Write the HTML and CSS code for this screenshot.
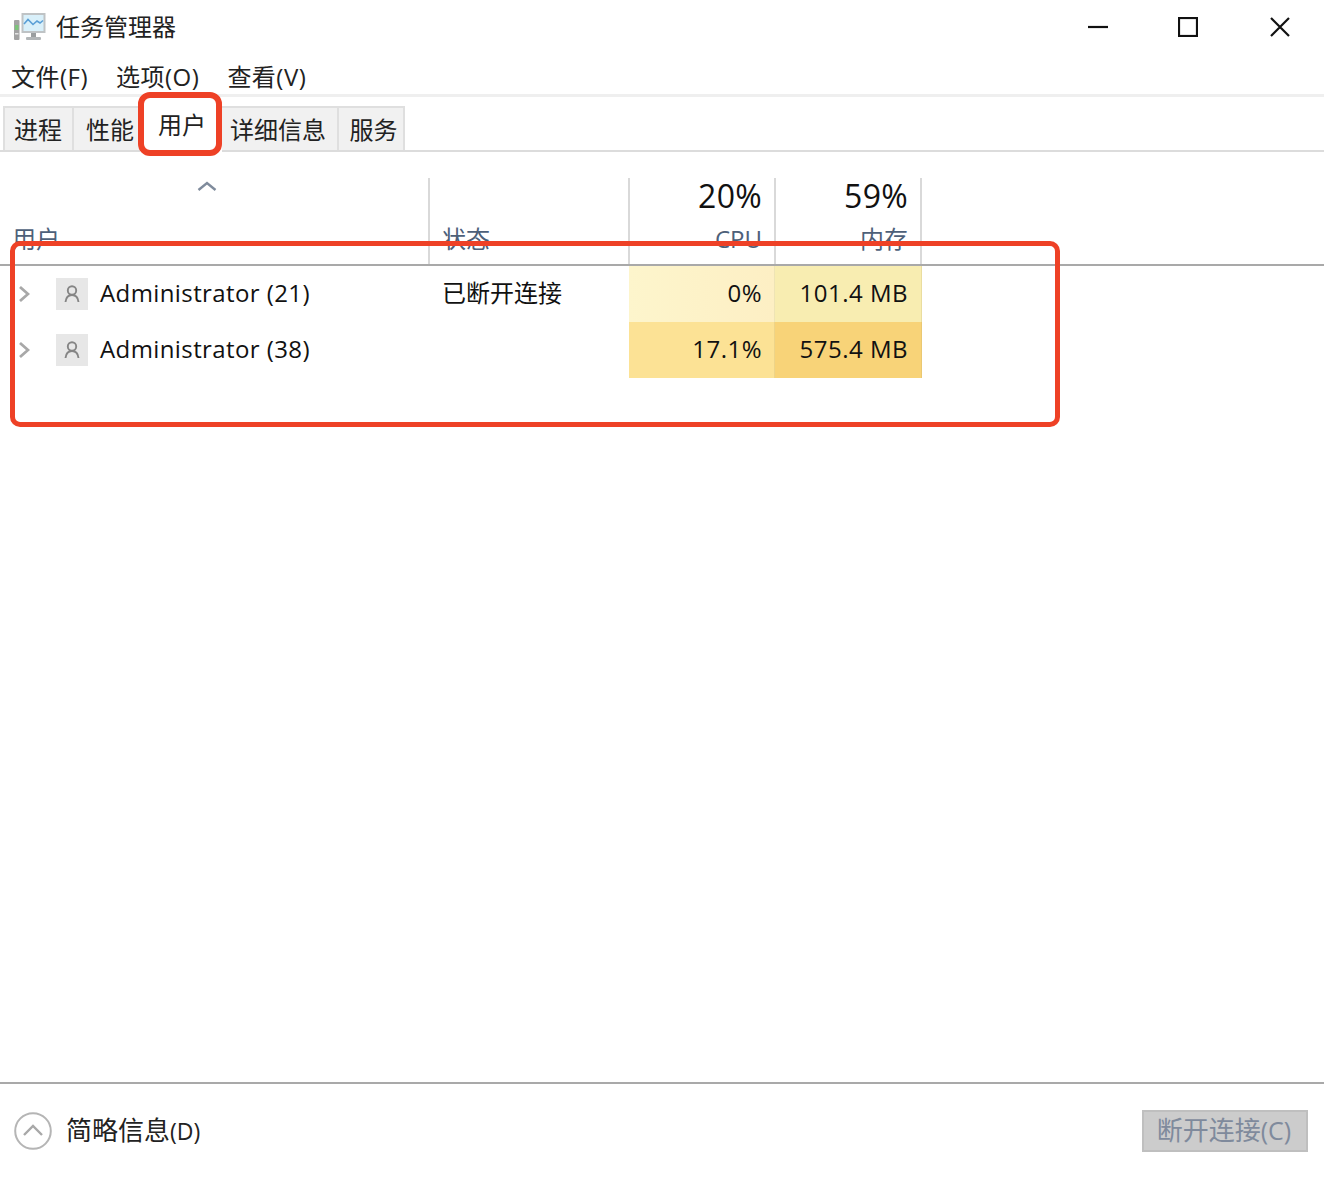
FILE: index.html
```html
<!DOCTYPE html>
<html lang="zh-CN">
<head>
<meta charset="utf-8">
<title>任务管理器</title>
<link rel="stylesheet" href="styles.css">
</head>
<body>
<div class="window">
  <header class="titlebar">
    <svg class="app-icon" width="34" height="30" viewBox="0 0 34 30">
      <rect x="1" y="8" width="5.5" height="20" rx="1" fill="#a3a3a3"/>
      <rect x="2" y="13" width="3.5" height="5" fill="#7cc47a"/>
      <rect x="2" y="21" width="3.5" height="1.5" fill="#e4e4e4"/>
      <rect x="8.5" y="1" width="24" height="20" fill="#bfc3c5"/>
      <rect x="10.5" y="3" width="20" height="16" fill="#d9f0fa"/>
      <path d="M11 12 L15 7.5 L20 12.5 L24 9 L27 11 L30 8.5" fill="none" stroke="#5a9fd6" stroke-width="1.6"/>
      <rect x="18" y="21" width="5" height="4" fill="#9a9ea0"/>
      <rect x="13" y="25" width="15" height="3" rx="1" fill="#b2b6b8"/>
    </svg>
    <span class="app-title">任务管理器</span>
    <div class="win-controls">
      <svg width="20" height="20" viewBox="0 0 20 20"><path d="M0 10 H20" class="win-stroke"/></svg>
      <svg width="20" height="20" viewBox="0 0 20 20"><rect x="1" y="1" width="18" height="18" class="win-stroke"/></svg>
      <svg width="20" height="20" viewBox="0 0 20 20"><path d="M1 1 L19 19 M19 1 L1 19" class="win-stroke"/></svg>
    </div>
  </header>

  <nav class="menubar">
    <span>文件(F)</span>
    <span>选项(O)</span>
    <span>查看(V)</span>
  </nav>

  <div class="tabs">
    <span class="tab tab-a">进程</span>
    <span class="tab tab-b">性能</span>
    <span class="tab tab-active">用户</span>
    <span class="tab tab-c">详细信息</span>
    <span class="tab tab-d">服务</span>
  </div>

  <main class="content">
    <div class="table-head">
      <div class="th">
        <svg class="sort-caret" width="20" height="10" viewBox="0 0 20 10"><path d="M1.5 9 L10 2 L18.5 9" fill="none" stroke="#7f8b9c" stroke-width="2.4"/></svg>
        <span class="th-label">用户</span>
      </div>
      <div class="th"><span class="th-label">状态</span></div>
      <div class="th th-num"><span class="th-value">20%</span><span class="th-label">CPU</span></div>
      <div class="th th-num"><span class="th-value">59%</span><span class="th-label">内存</span></div>
    </div>

    <div class="row">
      <div class="cell cell-user">
        <svg class="chevron" width="12" height="18" viewBox="0 0 12 18"><path d="M2 2 L10 9 L2 16" fill="none" stroke="#a8a8a8" stroke-width="2.8"/></svg>
        <span class="avatar"><svg width="18" height="20" viewBox="0 0 18 20"><circle cx="9" cy="6.5" r="4.2" fill="none" stroke="#858585" stroke-width="1.9"/><path d="M2.5 18 C3 13.5 5.5 11 9 11 C12.5 11 15 13.5 15.5 18" fill="none" stroke="#858585" stroke-width="1.9"/></svg></span>
        <span class="user-name">Administrator (21)</span>
      </div>
      <div class="cell cell-status">已断开连接</div>
      <div class="cell cell-num heat-cpu-low">0%</div>
      <div class="cell cell-num heat-mem-low">101.4 MB</div>
    </div>
    <div class="row">
      <div class="cell cell-user">
        <svg class="chevron" width="12" height="18" viewBox="0 0 12 18"><path d="M2 2 L10 9 L2 16" fill="none" stroke="#a8a8a8" stroke-width="2.8"/></svg>
        <span class="avatar"><svg width="18" height="20" viewBox="0 0 18 20"><circle cx="9" cy="6.5" r="4.2" fill="none" stroke="#858585" stroke-width="1.9"/><path d="M2.5 18 C3 13.5 5.5 11 9 11 C12.5 11 15 13.5 15.5 18" fill="none" stroke="#858585" stroke-width="1.9"/></svg></span>
        <span class="user-name">Administrator (38)</span>
      </div>
      <div class="cell cell-status"></div>
      <div class="cell cell-num heat-cpu-high">17.1%</div>
      <div class="cell cell-num heat-mem-high">575.4 MB</div>
    </div>
  </main>

  <footer class="footer">
    <div class="less-info">
      <svg width="38" height="38" viewBox="0 0 38 38"><circle cx="19" cy="19" r="17.8" fill="none" stroke="#b5b5b5" stroke-width="2"/><path d="M10 23 L19 14 L28 23" fill="none" stroke="#a8a8a8" stroke-width="2.4"/></svg>
      <span class="footer-text">简略信息<span class="mnemonic">(D)</span></span>
    </div>
    <button class="disconnect" disabled>断开连接<span class="mnemonic mnemonic-wide">(C)</span></button>
  </footer>

  <div class="callout callout-tab"></div>
  <div class="callout callout-table"></div>
</div>
</body>
</html>
```
FILE: styles.css
```css
* { box-sizing: border-box; }
html, body { margin: 0; padding: 0; background: #fff; }
body {
  font-family: "Open Sans", "Noto Sans CJK SC", sans-serif;
  color: #111;
  font-size: 24px;
}
.window {
  position: relative;
  width: 1324px;
  height: 1178px;
  display: flex;
  flex-direction: column;
  overflow: hidden;
}
.titlebar {
  height: 54px;
  display: flex;
  align-items: center;
  padding-left: 13px;
  flex: none;
}
.app-icon { margin-right: 9px; }
.app-title { font-size: 24px; line-height: 30px; color: #222; }
.win-controls {
  margin-left: auto;
  display: flex;
  gap: 70px;
  padding-right: 34px;
}
.win-controls svg:last-child { margin-left: 2px; }
.win-stroke { fill: none; stroke: #111; stroke-width: 2.2; }
.menubar {
  height: 43px;
  flex: none;
  display: flex;
  gap: 28px;
  padding: 7px 0 0 11px;
  border-bottom: 3px solid #efefef;
  line-height: 32px;
  color: #222;
  letter-spacing: 0.5px;
}
.tabs {
  height: 55px;
  flex: none;
  display: flex;
  align-items: flex-end;
  padding-left: 3px;
  border-bottom: 2px solid #dcdcdc;
}
.tab {
  height: 44px;
  display: flex;
  align-items: center;
  justify-content: center;
  background: #f1f1f1;
  border: 2px solid #dfdfdf;
  border-bottom: none;
  color: #222;
  padding-bottom: 1px;
}
.tab-a { width: 70px; border-right-width: 1px; padding-right: 1px; }
.tab-b { width: 67px; border-left-width: 1px; border-right: none; padding-left: 6px; }
.tab-active {
  width: 82px;
  height: 54px;
  background: #fff;
  border: none;
  padding: 0 0 4px 2px;
  margin-bottom: -2px;
}
.tab-c { width: 116px; border-left: none; border-right-width: 1px; padding-right: 3px; }
.tab-d { width: 67px; border-left-width: 1px; padding-left: 5px; }
.content { flex: 1; padding-top: 26px; }
.table-head {
  display: grid;
  grid-template-columns: 430px 200px 146px 146px;
  border-bottom: 2px solid #a9a9a9;
  height: 88px;
}
.row {
  display: grid;
  grid-template-columns: 429px 200px 146px 147px;
  height: 56px;
}
.th {
  height: 86px;
  border-right: 2px solid #d9d9d9;
  display: flex;
  flex-direction: column;
  justify-content: flex-end;
  position: relative;
  padding: 0 12px 9px;
  color: #4d6079;
}
.sort-caret { position: absolute; left: 197px; top: 3px; }
.th-label { line-height: 32px; }
.th-num { text-align: right; }
.th-value {
  font-size: 32px;
  line-height: 40px;
  color: #111;
  margin-bottom: 7px;
  letter-spacing: 0.3px;
}
.cell { display: flex; align-items: center; line-height: 32px; }
.cell-user { padding-left: 18px; }
.chevron { margin-right: 26px; }
.avatar {
  width: 32px;
  height: 32px;
  background: #e7e7e7;
  display: flex;
  align-items: center;
  justify-content: center;
  margin-right: 12px;
}
.user-name { padding-bottom: 2px; letter-spacing: 0.4px; }
.cell-status { padding: 0 0 2px 13px; }
.cell-num {
  justify-content: flex-end;
  padding: 0 12px 2px 0;
  border-right: 1px solid rgba(180, 160, 90, 0.2);
  letter-spacing: 0.5px;
}
.heat-mem-low, .heat-mem-high { padding-right: 13px; }
.heat-cpu-low { background: linear-gradient(90deg, #fdf5cc, #fdefc4); }
.heat-mem-low { background: #f8edb1; }
.heat-cpu-high { background: #fce295; }
.heat-mem-high { background: #f8d378; }
.footer {
  height: 96px;
  flex: none;
  border-top: 2px solid #a9a9a9;
  display: flex;
  align-items: center;
  justify-content: space-between;
  padding: 0 16px 0 14px;
}
.less-info { display: flex; align-items: center; gap: 14px; color: #222; }
.footer-text { font-size: 26px; padding-bottom: 4px; }
.mnemonic { font-size: 23px; }
.mnemonic-wide { font-size: 25px; }
.disconnect {
  width: 166px;
  height: 42px;
  background: #cccccc;
  border: 2px solid #bfbfbf;
  color: #7f8a9c;
  font: inherit;
  font-size: 26px;
  line-height: 32px;
  padding: 0 2px 2px 0;
  white-space: nowrap;
}
.callout {
  position: absolute;
  border: 5px solid #ee4126;
  border-radius: 10px;
  pointer-events: none;
}
.callout-tab { left: 138px; top: 92px; width: 84px; height: 64px; border-width: 6px; border-radius: 12px; }
.callout-table { left: 10px; top: 241px; width: 1050px; height: 186px; }
```
